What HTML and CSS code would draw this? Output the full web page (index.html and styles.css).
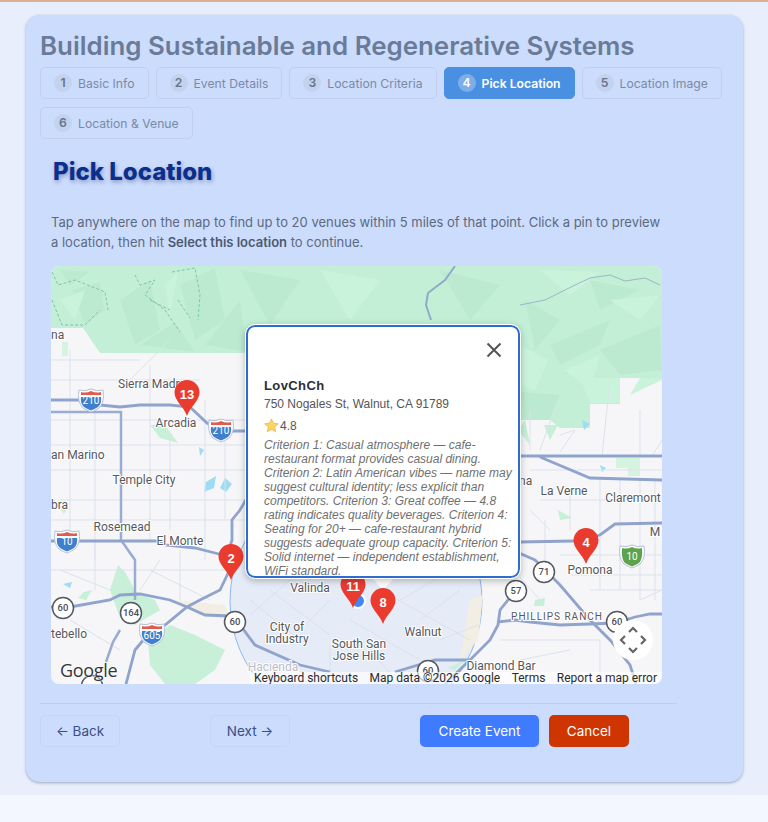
FILE: index.html
```html
<!DOCTYPE html>
<html lang="en">
<head>
  <meta charset="UTF-8" />
  <title>Create Event - Pick Location</title>
  <link rel="stylesheet" href="styles.css">
</head>
<body>

<div class="page">
  <div class="wizard-card">
    <h1 class="event-title">Building Sustainable and Regenerative Systems</h1>

    <div class="steps">
      <div class="step"><span class="step-num">1</span>Basic Info</div>
      <div class="step"><span class="step-num">2</span>Event Details</div>
      <div class="step"><span class="step-num">3</span>Location Criteria</div>
      <div class="step active"><span class="step-num">4</span>Pick Location</div>
      <div class="step"><span class="step-num">5</span>Location Image</div>
      <div class="step"><span class="step-num">6</span>Location &amp; Venue</div>
    </div>

    <div class="step-body">
      <h2 class="step-title">Pick Location</h2>
      <p class="step-help">Tap anywhere on the map to find up to 20 venues within 5 miles of that point. Click a pin to preview a location, then hit <strong>Select this location</strong> to continue.</p>

      <div class="map">
        <svg class="map-art" viewBox="51 266 611 418" width="611" height="418">
          <defs>
            <g id="pin">
              <path d="M0 -36 C-7 -36 -12.500 -30.500 -12.500 -23.500 C-12.500 -15 -3.500 -10 0 0 C3.500 -10 12.500 -15 12.500 -23.500 C12.500 -30.500 7 -36 0 -36 Z"/>
            </g>
            <g id="interstate">
              <path class="shield-edge" d="M-12 -10 Q-6 -8 0 -11 Q6 -8 12 -10 Q14 2 8 8 Q3 11 0 12 Q-3 11 -8 8 Q-14 2 -12 -10 Z"/>
              <path class="shield-blue" d="M-10 -3 H10 Q11 3 7 7 Q3 9.500 0 10.500 Q-3 9.500 -7 7 Q-11 3 -10 -3 Z"/>
              <path class="shield-red" d="M-10 -8 Q-5 -6.500 0 -9 Q5 -6.500 10 -8 L10 -5 H-10 Z"/>
            </g>
            <g id="interstate-green">
              <path class="shield-edge" d="M-12 -10 Q-6 -8 0 -11 Q6 -8 12 -10 Q14 2 8 8 Q3 11 0 12 Q-3 11 -8 8 Q-14 2 -12 -10 Z"/>
              <path class="shield-green" d="M-10 -8 Q-5 -6.500 0 -9 Q5 -6.500 10 -8 Q11 3 7 7 Q3 9.500 0 10.500 Q-3 9.500 -7 7 Q-11 3 -10 -8 Z"/>
            </g>
            <g id="state-route">
              <circle class="route-ring" r="10.500"/>
            </g>
          </defs>

          <!-- land -->
          <rect class="land" x="51" y="266" width="611" height="418"/>

          <!-- mountains -->
          <path class="green-a" d="M51 266 H662 V378 H620 V404 H590 V428 H560 L550 420 H520 V425 H247 V353 H100 L83 328 H51 Z"/>
          <path class="green-b" d="M72 290 L100 282 L105 310 L85 325 Z M120 300 L150 280 L160 330 L135 345 Z M140 345 L175 322 L195 352 Z M180 285 L215 268 L225 320 L195 340 Z M205 345 L240 300 L247 352 Z M60 270 L90 272 L70 285 Z M240 270 L300 280 L270 325 Z M525 300 L560 320 L535 350 Z M550 345 L610 320 L600 345 L560 365 Z M600 350 L660 325 L662 370 L620 375 Z M590 280 L640 290 L600 310 Z M520 392 L560 395 L550 420 L525 420 Z M440 270 L500 285 L470 320 Z"/>
          <path class="green-c" d="M540 270 L600 272 L570 295 Z M580 378 H620 V403 H590 Z M60 300 L85 290 L75 320 Z M165 285 L178 272 L170 315 Z M520 345 L548 360 L535 390 L520 385 Z M565 370 L600 355 L590 390 Z M610 300 L660 295 L640 320 Z M320 270 L380 280 L350 320 Z M630 395 L662 380 V378 H640 Z"/>
          <path class="trail" d="M52 272 L58 285 L75 280 L105 292 L108 310 M52 300 L62 325 L85 325 L100 310 M135 275 L140 285 L155 280 L145 295 L165 310 L180 332 M172 272 L195 268 L200 295 L198 320 M150 300 L170 310 M178 300 L190 318"/>
          <path class="ridge" d="M520 305 L545 300 L575 285 L590 278 L610 275 L625 281 L645 278 L660 285"/>
          <path class="stream" d="M455 266 L445 280 L428 293 L426 305 L431 320"/>

          <!-- circle around tapped point -->
          <circle class="radius" cx="356" cy="601" r="126"/>

          <!-- parks and water -->
          <path class="park" d="M110 590 L118 565 L125 572 L136 592 L155 600 L160 610 L135 625 L120 618 Z M84 592 L92 590 L86 600 L78 598 Z M57 505 L68 508 L64 514 Z M148 640 L170 625 L195 635 L225 650 L215 670 L195 684 L165 684 L150 665 Z M150 425 L165 425 L178 443 L160 438 Z M525 420 L530 445 L518 430 Z M544 425 L558 425 L550 440 Z M535 600 L545 598 L544 606 L534 606 Z M465 660 L455 670 L448 668 Z M607 615 L626 614 L632 622 L624 626 Z M558 510 L572 518 L560 520 Z"/>
          <path class="park-lite" d="M616 458 H640 V476 H628 V468 H616 Z M62 342 H68 V356 H62 Z"/>
          <path class="water" d="M206 482 L216 476 L214 488 L204 492 Z M225 478 L232 484 L226 492 L220 488 Z M63 584 L72 582 L70 588 Z M582 420 L590 424 L584 430 Z M199 447 L204 450 L200 456 Z M600 465 L606 468 L602 472 Z"/>
          <path class="sand" d="M470 600 L483 595 L478 640 L460 660 L465 630 Z M175 600 L225 605 L230 620 L200 615 Z"/>

          <!-- local streets -->
          <path class="street" d="M51 360 H140 M51 380 H200 M51 420 H247 M51 445 H247 M51 470 H247 M60 500 H247 M51 520 H247 M51 570 H230 M70 350 V541 M95 410 V560 M150 365 V540 M170 440 V530 M205 400 V560 M225 440 V520 M130 380 L170 340 M60 570 L110 590 M150 570 L210 600 M70 620 L120 650 M95 540 V590 M180 550 V600 M160 560 L140 590"/>
          <path class="street" d="M250 600 L300 640 M270 590 L330 635 M290 580 L250 615 M330 600 L290 640 M350 620 L420 660 M380 590 L470 640 M400 600 L440 577 M330 645 V684 M420 620 L460 590 M440 640 L478 625 M370 650 L400 684 M500 640 H600 M520 660 L570 650 M540 600 L520 577 M600 640 V684 M640 600 L662 590"/>
          <path class="street" d="M530 450 V410 M556 405 L540 450 M560 435 L575 430 L560 452 M610 380 L602 456 M640 410 V456 M662 440 L652 456 M530 470 H662 M540 500 H662 M545 520 V577 M570 495 V530 M600 480 V590 M620 480 V590 M640 480 V600 M655 480 V600 M560 555 H662 M570 575 H662 M590 590 H662 M530 510 L550 530"/>

          <!-- freeways -->
          <path class="road-main" d="M51 400 H80 M100 405 L120 407 L140 405 L170 405 L190 407 L207 423 L222 431 H247"/>
          <path class="road-thin" d="M51 412 H121 V540 L135 560 V600"/>
          <path class="road-main" d="M51 541 H157 L165 545 L195 548 L215 553 L227 556 L232 540 L232 520 L240 510 L247 498"/>
          <path class="road-main" d="M51 607 H70 L110 600 L120 595 L140 594 L170 600 L187 607 L205 615 L230 616 L240 625 L255 645 L300 665 L330 672"/>
          <path class="road-main" d="M232 565 L220 590 L200 600 L187 607 L165 625 L150 632 L135 650 L126 684"/>
          <path class="road-thin" d="M120 630 L113 642 L106 662"/>
          <path class="road-main" d="M519 542 L573 541 L600 535 L615 524 L662 523"/>
          <path class="road-main" d="M519 553 L535 560 L560 585 L590 620 L610 640 L630 665 L636 684"/>
          <path class="road-main" d="M497 622 L515 620 L530 622 L560 625 L590 624 L615 623 L635 617 L650 614 H662"/>
          <path class="road-main" d="M516 590 L500 610 L498 625 L490 640 L470 660 L445 684 M470 660 H435 L395 672"/>
          <path class="road-main" d="M520 456 H662 M540 457 L590 478 L662 480"/>

          <!-- route shields -->
          <use href="#interstate" x="91" y="400"/>
          <text class="shield-text" x="91" y="404">210</text>
          <use href="#interstate" x="221" y="430"/>
          <text class="shield-text" x="221" y="434">210</text>
          <use href="#interstate" x="67" y="541"/>
          <text class="shield-text" x="67" y="545">10</text>
          <use href="#interstate" x="152" y="634"/>
          <text class="shield-text" x="152" y="639">605</text>
          <use href="#interstate-green" x="632" y="556"/>
          <text class="shield-text" x="632" y="560">10</text>

          <use href="#state-route" x="63" y="608"/>
          <text class="route-text" x="63" y="611">60</text>
          <use href="#state-route" x="235" y="622"/>
          <text class="route-text" x="235" y="625">60</text>
          <use href="#state-route" x="131" y="613"/>
          <text class="route-text" x="131" y="616">164</text>
          <use href="#state-route" x="544" y="572"/>
          <text class="route-text" x="544" y="575">71</text>
          <use href="#state-route" x="516" y="591"/>
          <text class="route-text" x="516" y="594">57</text>
          <use href="#state-route" x="617" y="622"/>
          <text class="route-text" x="617" y="625">60</text>
          <use href="#state-route" x="428" y="671"/>
          <text class="route-text" x="428" y="674">60</text>
          <use href="#state-route" x="92" y="686"/>

          <!-- place names -->
          <text class="place start" x="51" y="339">na</text>
          <text class="place start" x="118" y="388">Sierra Madre</text>
          <text class="place" x="176" y="427">Arcadia</text>
          <text class="place start" x="51" y="459">an Marino</text>
          <text class="place" x="144" y="484">Temple City</text>
          <text class="place start" x="51" y="509">bra</text>
          <text class="place" x="122" y="531">Rosemead</text>
          <text class="place" x="180" y="545">El Monte</text>
          <text class="place start" x="51" y="638">tebello</text>
          <text class="place" x="310" y="592">Valinda</text>
          <text class="place" x="287" y="631">City of</text>
          <text class="place" x="287" y="643">Industry</text>
          <text class="place" x="359" y="648">South San</text>
          <text class="place" x="359" y="660">Jose Hills</text>
          <text class="place" x="423" y="636">Walnut</text>
          <text class="place" x="501" y="670">Diamond Bar</text>
          <text class="place faint" x="273" y="671">Hacienda</text>
          <text class="place start" x="519" y="485">na</text>
          <text class="place" x="564" y="495">La Verne</text>
          <text class="place" x="633" y="502">Claremont</text>
          <text class="place" x="655" y="536">M</text>
          <text class="place" x="590" y="574">Pomona</text>
          <text class="place caps" x="557" y="620">PHILLIPS RANCH</text>

          <!-- tapped point -->
          <circle class="my-dot" cx="358" cy="601" r="7"/>

          <!-- venue pins -->
          <use class="pin" href="#pin" x="187" y="416"/>
          <text class="pin-text" x="187" y="399">13</text>
          <use class="pin" href="#pin" x="231" y="580"/>
          <text class="pin-text" x="231" y="563">2</text>
          <use class="pin" href="#pin" x="586" y="564"/>
          <text class="pin-text" x="586" y="547">4</text>
          <use class="pin" href="#pin" x="353" y="608"/>
          <text class="pin-text" x="353" y="591">11</text>
          <path class="tail" d="M371 577 H395 L383 590 Z"/>
          <use class="pin" href="#pin" x="383" y="624"/>
          <text class="pin-text" x="383" y="607">8</text>
        </svg>

        <div class="google-logo">Google</div>

        <div class="map-pan">
          <svg viewBox="0 0 40 40" width="40" height="40">
            <path d="M16 12 L20 8 L24 12 M28 16 L32 20 L28 24 M24 28 L20 32 L16 28 M12 24 L8 20 L12 16"/>
          </svg>
        </div>

        <div class="map-attrib">
          <span>Keyboard shortcuts</span>
          <span>Map data ©2026 Google</span>
          <span>Terms</span>
          <span>Report a map error</span>
        </div>

        <div class="info-window">
          <button class="info-close" type="button" aria-label="Close">
            <svg viewBox="0 0 16 16" width="16" height="16"><path d="M1.500 1.500 L14.500 14.500 M14.500 1.500 L1.500 14.500"/></svg>
          </button>
          <div class="venue-name">LovChCh</div>
          <div class="venue-addr">750 Nogales St, Walnut, CA 91789</div>
          <div class="venue-rating">
            <svg viewBox="0 0 24 24" width="15" height="15"><path d="M12 1.500 L15.200 8.300 L22.800 9.200 L17.200 14.400 L18.700 21.900 L12 18.200 L5.300 21.900 L6.800 14.400 L1.200 9.200 L8.800 8.300 Z"/></svg>
            4.8
          </div>
          <div class="venue-notes">Criterion 1: Casual atmosphere — cafe-restaurant format provides casual dining. Criterion 2: Latin American vibes — name may suggest cultural identity; less explicit than competitors. Criterion 3: Great coffee — 4.8 rating indicates quality beverages. Criterion 4: Seating for 20+ — cafe-restaurant hybrid suggests adequate group capacity. Criterion 5: Solid internet — independent establishment, WiFi standard.</div>
        </div>
      </div>
    </div>

    <div class="wizard-footer">
      <button class="btn btn-ghost" type="button">← Back</button>
      <button class="btn btn-ghost btn-next" type="button">Next →</button>
      <button class="btn btn-create" type="button">Create Event</button>
      <button class="btn btn-cancel" type="button">Cancel</button>
    </div>
  </div>
</div>

</body>
</html>
```

FILE: styles.css
```css
* {
  box-sizing: border-box;
}

body {
  margin: 0;
  min-height: 822px;
  font-family: Inter, 'Noto Sans', sans-serif;
  background-color: #f3f7ff;
  border-top: 2px solid #dcae96;
}

.page {
  background-color: #e8eefb;
  padding: 13px 25px 13px 26px;
}

.wizard-card {
  height: 767px;
  padding: 14px 14px 0;
  background-color: #ccdcfd;
  border-radius: 14px;
  box-shadow: 0 1px 3px rgba(60, 80, 120, 0.45);
}

.event-title {
  margin: 0 0 4px;
  font-size: 25.900px;
  line-height: 34px;
  font-weight: 600;
  color: #6a7b98;
}

.steps {
  display: flex;
  flex-wrap: wrap;
  gap: 8px 7px;
}

.step {
  display: flex;
  align-items: center;
  gap: 6px;
  height: 32px;
  padding: 0 13px;
  font-size: 12.200px;
  color: #7a8aa6;
  border: 1px solid #c0cfee;
  border-radius: 5px;
}

.step-num {
  width: 18px;
  height: 18px;
  border-radius: 50%;
  background-color: #c3d2ee;
  color: #66768f;
  font-weight: 600;
  text-align: center;
  line-height: 18px;
}

.step.active {
  background-color: #4a90e2;
  border-color: #4a90e2;
  color: #fff;
  font-weight: 600;
}

.step.active .step-num {
  background-color: #7eaeea;
  color: #fff;
}

.step-body {
  padding: 0 11px;
}

.step-title {
  margin: 17px 0 0 2px;
  font-size: 24px;
  line-height: 32px;
  font-weight: 800;
  color: #0b2f8a;
  text-shadow: 1px 2px 4px rgba(30, 50, 110, 0.4);
}

.step-help {
  max-width: 611px;
  margin: 24px 0 14px;
  font-size: 13px;
  line-height: 20px;
  color: #5b6a80;
}

.step-help strong {
  font-weight: 600;
  color: #4c5a70;
}

.map {
  position: relative;
  width: 611px;
  height: 418px;
  border-radius: 8px;
  overflow: hidden;
}

.map-art {
  display: block;
  font-family: Roboto, 'Liberation Sans', sans-serif;
}

.land { fill: #f6f6f8; }
.green-a { fill: #c3efd7; }
.green-b { fill: #bcead1; }
.green-c { fill: #caf3dc; }
.park { fill: #c8efd8; }
.park-lite { fill: #d4f4e0; }
.water { fill: #9edcf5; }
.sand { fill: #f3eee3; }

.trail {
  fill: none;
  stroke: #7fc4a6;
  stroke-width: 1;
  stroke-dasharray: 3 2;
}

.ridge {
  fill: none;
  stroke: #9fb5c4;
  stroke-width: 1;
}

.stream {
  fill: none;
  stroke: #93a9c9;
  stroke-width: 2;
}

.radius {
  fill: rgba(66, 133, 244, 0.09);
  stroke: #8fb6f2;
  stroke-width: 1;
}

.street {
  fill: none;
  stroke: #dce1ec;
  stroke-width: 1;
}

.road-main {
  fill: none;
  stroke: #8fa3cc;
  stroke-width: 2.800;
}

.road-thin {
  fill: none;
  stroke: #9aacd2;
  stroke-width: 2.500;
}

.shield-edge { fill: #fff; stroke: #b5c0d6; stroke-width: 1; }
.shield-blue { fill: #3f7fce; }
.shield-red { fill: #e25b4f; }
.shield-green { fill: #5da24c; }

.shield-text {
  font-size: 10px;
  fill: #fff;
  text-anchor: middle;
}

.route-ring {
  fill: #fff;
  stroke: #55585e;
  stroke-width: 1.500;
}

.route-text {
  font-size: 9.500px;
  font-weight: 500;
  fill: #4a4d52;
  text-anchor: middle;
}

.place {
  font-size: 12px;
  fill: #55585e;
  text-anchor: middle;
  paint-order: stroke;
  stroke: #fff;
  stroke-width: 2px;
}

.place.start { text-anchor: start; }
.place.faint { fill: #b9bdc6; }

.place.caps {
  font-size: 10px;
  letter-spacing: 1px;
}

.my-dot {
  fill: #4285f4;
  stroke: #fff;
  stroke-width: 2;
}

.pin { fill: #ea3b2f; }

.pin-text {
  font-family: 'Liberation Sans', sans-serif;
  font-size: 13px;
  font-weight: 700;
  fill: #fff;
  text-anchor: middle;
}

.tail { fill: #fff; }

.google-logo {
  position: absolute;
  left: 9px;
  bottom: 3px;
  font-family: 'Open Sans', sans-serif;
  font-size: 18px;
  line-height: 22px;
  font-weight: 500;
  letter-spacing: -0.3px;
  color: #333639;
  text-shadow: 0 0 2px #fff, 0 0 2px #fff;
}

.map-pan {
  position: absolute;
  right: 9px;
  bottom: 24px;
  width: 40px;
  height: 40px;
  border-radius: 50%;
  background-color: #fff;
}

.map-pan svg {
  display: block;
}

.map-pan path {
  fill: none;
  stroke: #666;
  stroke-width: 2.200;
}

.map-attrib {
  position: absolute;
  left: 199px;
  right: 0;
  bottom: 0;
  display: flex;
  justify-content: space-between;
  padding: 0 5px 0 4px;
  font-family: Roboto, 'Liberation Sans', sans-serif;
  font-size: 12px;
  line-height: 12px;
  color: #2b2b2b;
  background-color: rgba(255, 255, 255, 0.65);
}

.info-window {
  position: absolute;
  left: 195px;
  top: 59px;
  width: 274px;
  height: 253px;
  padding: 51px 5px 0 16px;
  background-color: #fff;
  border: 2px solid #2f6cd0;
  border-radius: 9px;
  outline: 1px solid #fff;
  box-shadow: 0 2px 7px 1px rgba(0, 0, 0, 0.25);
  font-family: 'Liberation Sans', Arial, sans-serif;
  overflow: hidden;
}

.info-close {
  position: absolute;
  right: 14px;
  top: 13px;
  width: 20px;
  height: 20px;
  padding: 2px;
  background: none;
  border: none;
}

.info-close svg {
  display: block;
}

.info-close path {
  fill: none;
  stroke: #555;
  stroke-width: 2;
}

.venue-name {
  font-size: 13px;
  line-height: 15px;
  font-weight: 700;
  letter-spacing: 0.4px;
  color: #2b2f38;
}

.venue-addr {
  margin-top: 4px;
  font-size: 12px;
  line-height: 14px;
  color: #555;
}

.venue-rating {
  display: flex;
  align-items: center;
  gap: 1px;
  margin-top: 7px;
  font-size: 12px;
  line-height: 14px;
  color: #555;
}

.venue-rating svg {
  fill: #fbd560;
  stroke: #e9a93a;
  stroke-width: 1;
}

.venue-notes {
  margin-top: 5px;
  font-size: 12px;
  line-height: 14px;
  font-style: italic;
  color: #707070;
}

.wizard-footer {
  display: flex;
  align-items: flex-start;
  width: 637px;
  margin-top: 19px;
  padding-top: 11px;
  border-top: 1px solid #bfcfee;
}

.btn {
  height: 32px;
  padding: 0 17px;
  font-family: inherit;
  font-size: 13.500px;
  border-radius: 5px;
}

.btn-ghost {
  width: 80px;
  padding: 0;
  color: #3a4f86;
  background-color: transparent;
  border: 1px solid #c5d5f7;
}

.btn-next {
  margin-left: 90px;
}

.btn-create {
  width: 119px;
  margin-left: 130px;
  padding: 0;
  color: #fff;
  background-color: #3f7bff;
  border: none;
}

.btn-cancel {
  width: 80px;
  margin-left: 10px;
  padding: 0;
  color: #fff;
  background-color: #cf3500;
  border: none;
}
```
